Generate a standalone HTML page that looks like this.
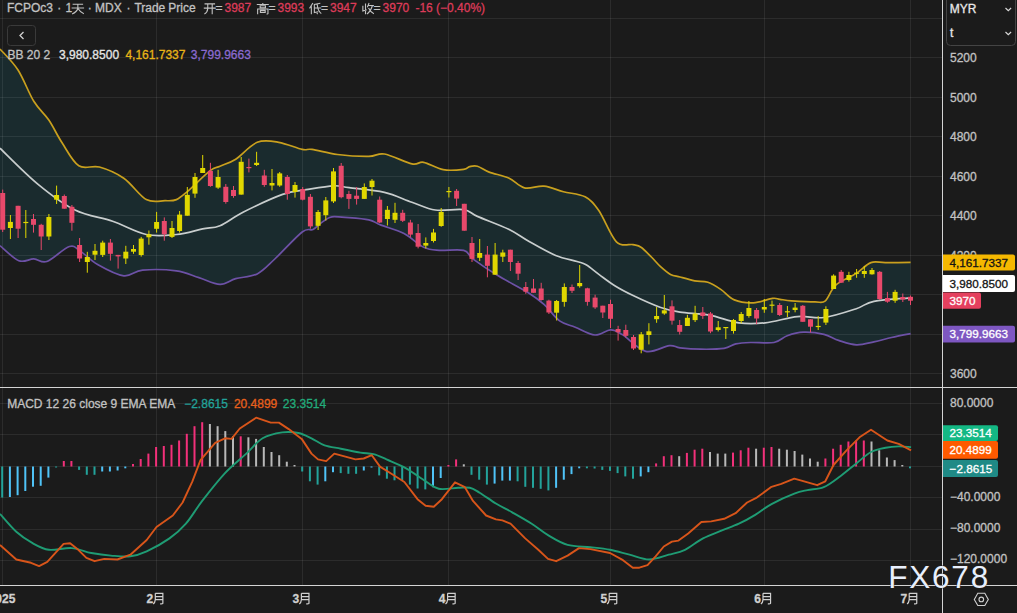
<!DOCTYPE html>
<html><head><meta charset="utf-8">
<style>
html,body{margin:0;padding:0;background:#1b1b1b;width:1017px;height:613px;overflow:hidden;}
svg{position:absolute;left:0;top:0;}
text{font-family:"Liberation Sans",sans-serif;}
</style></head><body>
<svg width="1017" height="613" viewBox="0 0 1017 613">
<rect width="1017" height="613" fill="#1b1b1b"/>
<path d="M0.0,49.0 C3.0,52.5 12.4,61.3 18.0,70.0 C23.6,78.7 28.7,93.0 33.8,101.3 C38.9,109.6 44.1,113.1 48.8,120.0 C53.5,126.9 56.9,134.9 61.9,142.5 C66.9,150.1 72.5,161.7 78.8,165.8 C85.0,169.9 91.9,164.9 99.4,167.0 C106.9,169.1 116.0,172.8 123.8,178.2 C131.6,183.6 139.4,195.8 146.3,199.6 C153.2,203.3 160.1,200.7 165.1,200.7 C170.1,200.7 172.7,201.2 176.4,199.6 C180.2,198.0 182.0,196.1 187.6,191.3 C193.2,186.5 204.7,174.9 210.1,170.7 C215.5,166.5 215.7,168.1 220.0,166.2 C224.3,164.3 229.5,163.2 235.7,159.2 C241.9,155.2 250.0,145.1 257.2,142.3 C264.4,139.5 271.2,141.1 278.7,142.3 C286.2,143.5 296.6,148.2 302.2,149.4 C307.8,150.6 306.1,148.6 312.0,149.4 C317.9,150.2 328.0,153.3 337.5,154.5 C347.0,155.7 361.0,156.5 368.8,156.4 C376.6,156.3 377.2,152.8 384.4,154.0 C391.6,155.2 405.4,162.5 411.9,163.9 C418.4,165.3 418.4,161.3 423.6,162.3 C428.8,163.3 436.5,168.5 443.2,169.7 C449.9,170.9 459.3,169.9 463.7,169.4 C468.1,168.9 467.3,167.1 469.6,166.6 C471.9,166.1 474.1,165.3 477.4,166.2 C480.7,167.1 484.0,170.1 489.2,172.1 C494.4,174.1 502.8,175.4 508.7,178.0 C514.6,180.6 518.5,186.4 524.4,187.8 C530.3,189.2 537.5,185.5 544.0,186.2 C550.5,186.8 556.6,189.9 563.5,191.7 C570.4,193.5 579.2,193.7 585.1,196.8 C591.0,199.9 593.6,203.0 598.8,210.5 C604.0,218.0 610.7,236.1 616.4,241.8 C622.1,247.5 628.9,243.7 633.0,244.6 C637.1,245.5 637.9,245.1 641.0,247.2 C644.1,249.3 648.2,253.8 651.4,257.0 C654.6,260.1 656.8,263.2 660.0,266.1 C663.2,269.0 667.2,272.6 670.5,274.4 C673.8,276.2 676.0,275.9 680.0,277.0 C684.0,278.1 690.1,279.9 694.7,280.8 C699.4,281.7 703.5,280.8 707.9,282.3 C712.3,283.8 716.7,286.7 721.1,289.6 C725.5,292.5 728.9,297.7 734.3,299.9 C739.7,302.1 747.0,303.1 753.4,302.8 C759.8,302.6 768.1,299.0 772.5,298.4 C776.9,297.8 776.7,298.9 779.9,299.3 C783.1,299.7 785.7,300.4 791.6,300.8 C797.5,301.2 809.5,301.9 815.1,301.9 C820.7,301.9 822.0,303.6 825.4,300.8 C828.8,298.0 830.6,289.8 835.7,285.2 C840.9,280.6 850.4,277.2 856.3,273.4 C862.2,269.6 866.0,264.4 870.9,262.6 C875.8,260.8 879.0,262.7 885.6,262.6 C892.2,262.6 906.4,262.4 910.6,262.3 L910.6,333.7 C907.4,334.3 897.6,336.1 891.5,337.5 C885.4,338.9 879.8,340.7 873.9,341.9 C868.0,343.1 862.2,345.1 856.3,344.8 C850.4,344.6 844.0,342.1 838.6,340.4 C833.2,338.6 829.8,335.7 823.9,334.3 C818.0,332.9 809.5,332.0 803.4,332.2 C797.3,332.4 792.1,334.0 787.2,335.7 C782.3,337.4 780.1,341.4 774.0,342.5 C767.9,343.6 756.9,342.3 750.5,342.5 C744.1,342.7 740.2,342.9 735.8,343.9 C731.4,344.9 730.0,347.5 724.1,348.4 C718.2,349.3 708.0,349.3 700.6,349.2 C693.2,349.1 685.2,348.4 680.0,347.8 C674.8,347.2 675.0,345.0 669.3,345.6 C663.6,346.2 653.6,353.2 645.8,351.4 C638.0,349.6 628.2,338.2 622.3,334.6 C616.4,331.0 615.1,329.8 610.5,329.9 C605.9,330.0 600.8,335.4 594.9,335.0 C589.0,334.6 581.2,329.6 575.3,327.2 C569.4,324.8 564.8,324.7 559.6,320.9 C554.4,317.1 549.2,309.1 544.0,304.4 C538.8,299.7 536.1,297.6 528.3,292.7 C520.5,287.8 506.1,280.7 497.0,275.1 C487.9,269.6 479.1,263.5 473.5,259.4 C467.9,255.3 469.4,251.9 463.7,250.4 C458.0,248.9 446.0,250.9 439.3,250.4 C432.6,249.9 429.5,250.1 423.6,247.3 C417.7,244.5 411.2,237.2 404.0,233.5 C396.8,229.8 386.4,227.2 380.5,224.9 C374.6,222.6 374.7,221.1 368.8,219.8 C362.9,218.5 351.1,217.8 345.0,217.3 C338.9,216.8 335.1,216.5 332.0,216.8 C328.9,217.2 328.0,218.3 326.1,219.4 C324.2,220.5 322.7,221.6 320.5,223.3 C318.3,225.0 316.1,228.1 313.0,229.5 C309.9,230.9 308.6,227.1 302.2,232.0 C295.8,236.9 282.3,252.0 274.8,259.0 C267.3,266.0 263.7,270.6 257.2,273.9 C250.7,277.2 241.9,276.9 235.7,278.6 C229.5,280.4 226.1,284.6 220.0,284.4 C213.9,284.2 206.2,279.9 198.9,277.6 C191.6,275.4 185.8,272.1 176.4,270.9 C167.0,269.6 151.4,269.3 142.6,270.1 C133.8,270.9 131.3,276.7 123.8,275.8 C116.3,274.9 104.8,268.6 97.6,264.5 C90.4,260.4 85.4,254.4 80.7,251.4 C76.0,248.4 75.0,244.8 69.4,246.5 C63.8,248.2 52.8,259.4 46.9,261.5 C41.0,263.6 38.5,259.0 33.8,258.9 C29.1,258.8 24.4,262.9 18.8,260.7 C13.2,258.5 3.1,248.2 0.0,245.7 Z" fill="#1a2b2e"/>
<rect x="0" y="18" width="942" height="1" fill="#ffffff" fill-opacity="0.08"/>
<rect x="0" y="57" width="942" height="1" fill="#ffffff" fill-opacity="0.08"/>
<rect x="0" y="97" width="942" height="1" fill="#ffffff" fill-opacity="0.08"/>
<rect x="0" y="136" width="942" height="1" fill="#ffffff" fill-opacity="0.08"/>
<rect x="0" y="176" width="942" height="1" fill="#ffffff" fill-opacity="0.08"/>
<rect x="0" y="215" width="942" height="1" fill="#ffffff" fill-opacity="0.08"/>
<rect x="0" y="255" width="942" height="1" fill="#ffffff" fill-opacity="0.08"/>
<rect x="0" y="294" width="942" height="1" fill="#ffffff" fill-opacity="0.08"/>
<rect x="0" y="334" width="942" height="1" fill="#ffffff" fill-opacity="0.08"/>
<rect x="0" y="373" width="942" height="1" fill="#ffffff" fill-opacity="0.08"/>
<rect x="0" y="403" width="942" height="1" fill="#ffffff" fill-opacity="0.08"/>
<rect x="0" y="434" width="942" height="1" fill="#ffffff" fill-opacity="0.08"/>
<rect x="0" y="466" width="942" height="1" fill="#ffffff" fill-opacity="0.08"/>
<rect x="0" y="497" width="942" height="1" fill="#ffffff" fill-opacity="0.08"/>
<rect x="0" y="529" width="942" height="1" fill="#ffffff" fill-opacity="0.08"/>
<rect x="0" y="560" width="942" height="1" fill="#ffffff" fill-opacity="0.08"/>
<rect x="2" y="0" width="1" height="585" fill="#ffffff" fill-opacity="0.08"/>
<rect x="156" y="0" width="1" height="585" fill="#ffffff" fill-opacity="0.08"/>
<rect x="302" y="0" width="1" height="585" fill="#ffffff" fill-opacity="0.08"/>
<rect x="448" y="0" width="1" height="585" fill="#ffffff" fill-opacity="0.08"/>
<rect x="610" y="0" width="1" height="585" fill="#ffffff" fill-opacity="0.08"/>
<rect x="764" y="0" width="1" height="585" fill="#ffffff" fill-opacity="0.08"/>
<rect x="910" y="0" width="1" height="585" fill="#ffffff" fill-opacity="0.08"/>
<path d="M0.0,49.0 C3.0,52.5 12.4,61.3 18.0,70.0 C23.6,78.7 28.7,93.0 33.8,101.3 C38.9,109.6 44.1,113.1 48.8,120.0 C53.5,126.9 56.9,134.9 61.9,142.5 C66.9,150.1 72.5,161.7 78.8,165.8 C85.0,169.9 91.9,164.9 99.4,167.0 C106.9,169.1 116.0,172.8 123.8,178.2 C131.6,183.6 139.4,195.8 146.3,199.6 C153.2,203.3 160.1,200.7 165.1,200.7 C170.1,200.7 172.7,201.2 176.4,199.6 C180.2,198.0 182.0,196.1 187.6,191.3 C193.2,186.5 204.7,174.9 210.1,170.7 C215.5,166.5 215.7,168.1 220.0,166.2 C224.3,164.3 229.5,163.2 235.7,159.2 C241.9,155.2 250.0,145.1 257.2,142.3 C264.4,139.5 271.2,141.1 278.7,142.3 C286.2,143.5 296.6,148.2 302.2,149.4 C307.8,150.6 306.1,148.6 312.0,149.4 C317.9,150.2 328.0,153.3 337.5,154.5 C347.0,155.7 361.0,156.5 368.8,156.4 C376.6,156.3 377.2,152.8 384.4,154.0 C391.6,155.2 405.4,162.5 411.9,163.9 C418.4,165.3 418.4,161.3 423.6,162.3 C428.8,163.3 436.5,168.5 443.2,169.7 C449.9,170.9 459.3,169.9 463.7,169.4 C468.1,168.9 467.3,167.1 469.6,166.6 C471.9,166.1 474.1,165.3 477.4,166.2 C480.7,167.1 484.0,170.1 489.2,172.1 C494.4,174.1 502.8,175.4 508.7,178.0 C514.6,180.6 518.5,186.4 524.4,187.8 C530.3,189.2 537.5,185.5 544.0,186.2 C550.5,186.8 556.6,189.9 563.5,191.7 C570.4,193.5 579.2,193.7 585.1,196.8 C591.0,199.9 593.6,203.0 598.8,210.5 C604.0,218.0 610.7,236.1 616.4,241.8 C622.1,247.5 628.9,243.7 633.0,244.6 C637.1,245.5 637.9,245.1 641.0,247.2 C644.1,249.3 648.2,253.8 651.4,257.0 C654.6,260.1 656.8,263.2 660.0,266.1 C663.2,269.0 667.2,272.6 670.5,274.4 C673.8,276.2 676.0,275.9 680.0,277.0 C684.0,278.1 690.1,279.9 694.7,280.8 C699.4,281.7 703.5,280.8 707.9,282.3 C712.3,283.8 716.7,286.7 721.1,289.6 C725.5,292.5 728.9,297.7 734.3,299.9 C739.7,302.1 747.0,303.1 753.4,302.8 C759.8,302.6 768.1,299.0 772.5,298.4 C776.9,297.8 776.7,298.9 779.9,299.3 C783.1,299.7 785.7,300.4 791.6,300.8 C797.5,301.2 809.5,301.9 815.1,301.9 C820.7,301.9 822.0,303.6 825.4,300.8 C828.8,298.0 830.6,289.8 835.7,285.2 C840.9,280.6 850.4,277.2 856.3,273.4 C862.2,269.6 866.0,264.4 870.9,262.6 C875.8,260.8 879.0,262.7 885.6,262.6 C892.2,262.6 906.4,262.4 910.6,262.3" fill="none" stroke="#c9a01e" stroke-width="1.7" stroke-linejoin="round"/>
<path d="M0.0,245.7 C3.1,248.2 13.2,258.5 18.8,260.7 C24.4,262.9 29.1,258.8 33.8,258.9 C38.5,259.0 41.0,263.6 46.9,261.5 C52.8,259.4 63.8,248.2 69.4,246.5 C75.0,244.8 76.0,248.4 80.7,251.4 C85.4,254.4 90.4,260.4 97.6,264.5 C104.8,268.6 116.3,274.9 123.8,275.8 C131.3,276.7 133.8,270.9 142.6,270.1 C151.4,269.3 167.0,269.6 176.4,270.9 C185.8,272.1 191.6,275.4 198.9,277.6 C206.2,279.9 213.9,284.2 220.0,284.4 C226.1,284.6 229.5,280.4 235.7,278.6 C241.9,276.9 250.7,277.2 257.2,273.9 C263.7,270.6 267.3,266.0 274.8,259.0 C282.3,252.0 295.8,236.9 302.2,232.0 C308.6,227.1 309.9,230.9 313.0,229.5 C316.1,228.1 318.3,225.0 320.5,223.3 C322.7,221.6 324.2,220.5 326.1,219.4 C328.0,218.3 328.9,217.2 332.0,216.8 C335.1,216.5 338.9,216.8 345.0,217.3 C351.1,217.8 362.9,218.5 368.8,219.8 C374.7,221.1 374.6,222.6 380.5,224.9 C386.4,227.2 396.8,229.8 404.0,233.5 C411.2,237.2 417.7,244.5 423.6,247.3 C429.5,250.1 432.6,249.9 439.3,250.4 C446.0,250.9 458.0,248.9 463.7,250.4 C469.4,251.9 467.9,255.3 473.5,259.4 C479.1,263.5 487.9,269.6 497.0,275.1 C506.1,280.7 520.5,287.8 528.3,292.7 C536.1,297.6 538.8,299.7 544.0,304.4 C549.2,309.1 554.4,317.1 559.6,320.9 C564.8,324.7 569.4,324.8 575.3,327.2 C581.2,329.6 589.0,334.6 594.9,335.0 C600.8,335.4 605.9,330.0 610.5,329.9 C615.1,329.8 616.4,331.0 622.3,334.6 C628.2,338.2 638.0,349.6 645.8,351.4 C653.6,353.2 663.6,346.2 669.3,345.6 C675.0,345.0 674.8,347.2 680.0,347.8 C685.2,348.4 693.2,349.1 700.6,349.2 C708.0,349.3 718.2,349.3 724.1,348.4 C730.0,347.5 731.4,344.9 735.8,343.9 C740.2,342.9 744.1,342.7 750.5,342.5 C756.9,342.3 767.9,343.6 774.0,342.5 C780.1,341.4 782.3,337.4 787.2,335.7 C792.1,334.0 797.3,332.4 803.4,332.2 C809.5,332.0 818.0,332.9 823.9,334.3 C829.8,335.7 833.2,338.6 838.6,340.4 C844.0,342.1 850.4,344.6 856.3,344.8 C862.2,345.1 868.0,343.1 873.9,341.9 C879.8,340.7 885.4,338.9 891.5,337.5 C897.6,336.1 907.4,334.3 910.6,333.7" fill="none" stroke="#6d51a6" stroke-width="1.7" stroke-linejoin="round"/>
<path d="M0.0,148.2 C6.2,154.1 25.0,173.5 37.5,183.8 C50.0,194.1 62.5,203.8 75.0,210.0 C87.5,216.2 100.7,217.2 112.6,221.3 C124.5,225.4 135.7,232.3 146.3,234.5 C156.9,236.7 167.0,235.4 176.4,234.5 C185.8,233.6 195.3,230.4 202.6,228.9 C209.9,227.4 213.2,228.5 220.0,225.7 C226.8,222.9 233.1,217.2 243.5,212.0 C253.9,206.8 272.2,198.1 282.6,194.4 C293.0,190.7 297.6,191.1 306.1,189.7 C314.6,188.3 326.3,186.1 333.5,185.8 C340.7,185.5 340.7,186.6 349.2,187.7 C357.7,188.8 373.9,190.0 384.4,192.4 C394.8,194.8 403.4,199.3 411.9,202.2 C420.4,205.1 426.7,208.8 435.3,210.0 C443.9,211.2 456.7,208.6 463.7,209.7 C470.7,210.8 469.9,213.1 477.4,216.4 C484.9,219.7 500.2,225.2 508.7,229.3 C517.2,233.4 520.5,236.6 528.3,241.0 C536.1,245.4 547.6,252.1 555.7,255.5 C563.8,258.9 571.9,259.9 577.0,261.5 C582.1,263.1 582.4,262.6 586.1,264.8 C589.8,267.0 594.4,271.1 599.2,274.6 C604.0,278.1 609.1,282.2 614.8,285.7 C620.4,289.2 625.6,291.9 633.1,295.5 C640.6,299.1 652.2,304.4 660.0,307.2 C667.8,310.0 671.8,310.9 680.0,312.2 C688.2,313.5 699.6,313.4 709.4,315.2 C719.2,317.0 729.5,321.5 738.8,322.8 C748.1,324.1 755.4,323.8 765.2,322.8 C775.0,321.8 787.7,317.5 797.5,316.6 C807.3,315.7 814.1,318.8 823.9,317.5 C833.7,316.2 848.0,311.4 856.3,308.7 C864.6,306.0 864.8,303.1 873.9,301.3 C883.0,299.5 904.5,298.4 910.6,297.8" fill="none" stroke="#c8cdcd" stroke-width="1.7" stroke-linejoin="round"/>
<rect x="2.2" y="189.6" width="1" height="42.4" fill="#e8496b"/>
<rect x="0.2" y="193.0" width="5" height="36.7" fill="#e8496b"/>
<rect x="9.9" y="215.0" width="1" height="24.0" fill="#e0d700"/>
<rect x="7.9" y="221.9" width="5" height="6.1" fill="#e0d700"/>
<rect x="17.6" y="205.8" width="1" height="32.2" fill="#e8496b"/>
<rect x="15.6" y="205.8" width="5" height="22.9" fill="#e8496b"/>
<rect x="25.3" y="210.0" width="1" height="28.0" fill="#e0d700"/>
<rect x="23.3" y="221.9" width="5" height="1.2" fill="#e0d700"/>
<rect x="33.0" y="214.0" width="1" height="18.6" fill="#e8496b"/>
<rect x="31.0" y="219.0" width="5" height="5.8" fill="#e8496b"/>
<rect x="40.7" y="223.8" width="1" height="26.2" fill="#e8496b"/>
<rect x="38.7" y="224.8" width="5" height="11.7" fill="#e8496b"/>
<rect x="48.4" y="214.0" width="1" height="26.0" fill="#e0d700"/>
<rect x="46.4" y="217.0" width="5" height="19.5" fill="#e0d700"/>
<rect x="56.1" y="185.6" width="1" height="18.4" fill="#e0d700"/>
<rect x="54.1" y="195.0" width="5" height="4.7" fill="#e0d700"/>
<rect x="63.8" y="194.5" width="1" height="14.2" fill="#e8496b"/>
<rect x="61.8" y="196.0" width="5" height="12.7" fill="#e8496b"/>
<rect x="71.4" y="205.0" width="1" height="25.7" fill="#e8496b"/>
<rect x="69.4" y="206.8" width="5" height="16.0" fill="#e8496b"/>
<rect x="79.1" y="238.0" width="1" height="24.0" fill="#e8496b"/>
<rect x="77.1" y="245.0" width="5" height="13.5" fill="#e8496b"/>
<rect x="86.8" y="251.8" width="1" height="20.9" fill="#e0d700"/>
<rect x="84.8" y="257.0" width="5" height="5.0" fill="#e0d700"/>
<rect x="94.5" y="244.0" width="1" height="16.0" fill="#e0d700"/>
<rect x="92.5" y="250.8" width="5" height="3.9" fill="#e0d700"/>
<rect x="102.2" y="240.7" width="1" height="16.3" fill="#e0d700"/>
<rect x="100.2" y="242.6" width="5" height="12.3" fill="#e0d700"/>
<rect x="109.9" y="239.0" width="1" height="21.6" fill="#e8496b"/>
<rect x="107.9" y="242.6" width="5" height="11.2" fill="#e8496b"/>
<rect x="117.6" y="254.9" width="1" height="13.7" fill="#e8496b"/>
<rect x="115.6" y="254.9" width="5" height="1.5" fill="#e8496b"/>
<rect x="125.3" y="245.8" width="1" height="18.2" fill="#e0d700"/>
<rect x="123.3" y="251.7" width="5" height="6.8" fill="#e0d700"/>
<rect x="133.0" y="245.0" width="1" height="8.8" fill="#e0d700"/>
<rect x="131.0" y="249.0" width="5" height="2.7" fill="#e0d700"/>
<rect x="140.7" y="236.9" width="1" height="19.7" fill="#e0d700"/>
<rect x="138.7" y="238.6" width="5" height="16.4" fill="#e0d700"/>
<rect x="148.4" y="230.5" width="1" height="14.2" fill="#e0d700"/>
<rect x="146.4" y="234.3" width="5" height="3.0" fill="#e0d700"/>
<rect x="156.1" y="211.9" width="1" height="20.7" fill="#e0d700"/>
<rect x="154.1" y="222.0" width="5" height="6.8" fill="#e0d700"/>
<rect x="163.8" y="217.4" width="1" height="23.3" fill="#e8496b"/>
<rect x="161.8" y="221.0" width="5" height="13.3" fill="#e8496b"/>
<rect x="171.5" y="221.0" width="1" height="17.0" fill="#e0d700"/>
<rect x="169.5" y="228.0" width="5" height="8.9" fill="#e0d700"/>
<rect x="179.1" y="211.0" width="1" height="21.6" fill="#e0d700"/>
<rect x="177.1" y="214.6" width="5" height="16.4" fill="#e0d700"/>
<rect x="186.8" y="187.0" width="1" height="28.7" fill="#e0d700"/>
<rect x="184.8" y="194.9" width="5" height="20.8" fill="#e0d700"/>
<rect x="194.5" y="173.0" width="1" height="24.8" fill="#e0d700"/>
<rect x="192.5" y="177.0" width="5" height="16.6" fill="#e0d700"/>
<rect x="202.2" y="155.0" width="1" height="18.0" fill="#e0d700"/>
<rect x="200.2" y="168.0" width="5" height="5.0" fill="#e0d700"/>
<rect x="209.9" y="162.8" width="1" height="24.0" fill="#e8496b"/>
<rect x="207.9" y="170.9" width="5" height="15.1" fill="#e8496b"/>
<rect x="217.6" y="169.8" width="1" height="19.1" fill="#e0d700"/>
<rect x="215.6" y="177.0" width="5" height="10.6" fill="#e0d700"/>
<rect x="225.3" y="184.0" width="1" height="19.7" fill="#e8496b"/>
<rect x="223.3" y="186.8" width="5" height="15.2" fill="#e8496b"/>
<rect x="233.0" y="186.0" width="1" height="11.8" fill="#e8496b"/>
<rect x="231.0" y="190.0" width="5" height="6.0" fill="#e8496b"/>
<rect x="240.7" y="157.0" width="1" height="37.6" fill="#e0d700"/>
<rect x="238.7" y="161.8" width="5" height="32.8" fill="#e0d700"/>
<rect x="248.4" y="158.6" width="1" height="13.8" fill="#e8496b"/>
<rect x="246.4" y="167.0" width="5" height="1.2" fill="#e8496b"/>
<rect x="256.1" y="151.8" width="1" height="14.2" fill="#e0d700"/>
<rect x="254.1" y="162.8" width="5" height="2.2" fill="#e0d700"/>
<rect x="263.8" y="169.8" width="1" height="17.0" fill="#e8496b"/>
<rect x="261.8" y="175.5" width="5" height="9.5" fill="#e8496b"/>
<rect x="271.5" y="169.0" width="1" height="21.4" fill="#e0d700"/>
<rect x="269.5" y="183.0" width="5" height="2.5" fill="#e0d700"/>
<rect x="279.2" y="172.0" width="1" height="14.8" fill="#e0d700"/>
<rect x="277.2" y="173.4" width="5" height="12.1" fill="#e0d700"/>
<rect x="286.8" y="175.0" width="1" height="24.7" fill="#e8496b"/>
<rect x="284.8" y="177.0" width="5" height="17.0" fill="#e8496b"/>
<rect x="294.5" y="182.0" width="1" height="15.6" fill="#e0d700"/>
<rect x="292.5" y="185.0" width="5" height="7.0" fill="#e0d700"/>
<rect x="302.2" y="187.0" width="1" height="13.4" fill="#e8496b"/>
<rect x="300.2" y="189.0" width="5" height="10.7" fill="#e8496b"/>
<rect x="309.9" y="194.0" width="1" height="34.6" fill="#e8496b"/>
<rect x="307.9" y="196.8" width="5" height="29.6" fill="#e8496b"/>
<rect x="317.6" y="210.0" width="1" height="20.0" fill="#e0d700"/>
<rect x="315.6" y="212.0" width="5" height="13.8" fill="#e0d700"/>
<rect x="325.3" y="197.0" width="1" height="23.5" fill="#e0d700"/>
<rect x="323.3" y="200.4" width="5" height="14.8" fill="#e0d700"/>
<rect x="333.0" y="168.0" width="1" height="35.0" fill="#e0d700"/>
<rect x="331.0" y="171.4" width="5" height="30.0" fill="#e0d700"/>
<rect x="340.7" y="163.0" width="1" height="35.3" fill="#e8496b"/>
<rect x="338.7" y="165.8" width="5" height="31.4" fill="#e8496b"/>
<rect x="348.4" y="190.8" width="1" height="18.1" fill="#e8496b"/>
<rect x="346.4" y="194.0" width="5" height="4.9" fill="#e8496b"/>
<rect x="356.1" y="187.0" width="1" height="17.6" fill="#e8496b"/>
<rect x="354.1" y="195.7" width="5" height="3.2" fill="#e8496b"/>
<rect x="363.8" y="183.4" width="1" height="15.5" fill="#e0d700"/>
<rect x="361.8" y="187.0" width="5" height="11.9" fill="#e0d700"/>
<rect x="371.5" y="179.0" width="1" height="16.5" fill="#e0d700"/>
<rect x="369.5" y="180.7" width="5" height="6.3" fill="#e0d700"/>
<rect x="379.2" y="196.5" width="1" height="26.5" fill="#e8496b"/>
<rect x="377.2" y="199.7" width="5" height="22.8" fill="#e8496b"/>
<rect x="386.9" y="206.0" width="1" height="19.5" fill="#e0d700"/>
<rect x="384.9" y="209.8" width="5" height="9.2" fill="#e0d700"/>
<rect x="394.5" y="202.8" width="1" height="20.2" fill="#e0d700"/>
<rect x="392.5" y="212.8" width="5" height="7.0" fill="#e0d700"/>
<rect x="402.2" y="209.8" width="1" height="12.2" fill="#e8496b"/>
<rect x="400.2" y="212.8" width="5" height="8.0" fill="#e8496b"/>
<rect x="409.9" y="219.8" width="1" height="17.6" fill="#e8496b"/>
<rect x="407.9" y="222.5" width="5" height="12.1" fill="#e8496b"/>
<rect x="417.6" y="224.0" width="1" height="24.4" fill="#e8496b"/>
<rect x="415.6" y="233.0" width="5" height="13.7" fill="#e8496b"/>
<rect x="425.3" y="237.4" width="1" height="11.0" fill="#e0d700"/>
<rect x="423.3" y="243.0" width="5" height="2.6" fill="#e0d700"/>
<rect x="433.0" y="228.9" width="1" height="13.6" fill="#e0d700"/>
<rect x="431.0" y="232.5" width="5" height="8.5" fill="#e0d700"/>
<rect x="440.7" y="208.0" width="1" height="18.8" fill="#e0d700"/>
<rect x="438.7" y="212.0" width="5" height="14.0" fill="#e0d700"/>
<rect x="448.4" y="187.0" width="1" height="10.5" fill="#e0d700"/>
<rect x="446.4" y="191.0" width="5" height="1.2" fill="#e0d700"/>
<rect x="456.1" y="189.0" width="1" height="17.0" fill="#e8496b"/>
<rect x="454.1" y="190.8" width="5" height="7.8" fill="#e8496b"/>
<rect x="463.8" y="203.8" width="1" height="26.9" fill="#e8496b"/>
<rect x="461.8" y="203.8" width="5" height="26.9" fill="#e8496b"/>
<rect x="471.5" y="237.0" width="1" height="25.0" fill="#e8496b"/>
<rect x="469.5" y="243.0" width="5" height="15.9" fill="#e8496b"/>
<rect x="479.2" y="239.0" width="1" height="22.0" fill="#e0d700"/>
<rect x="477.2" y="253.0" width="5" height="4.8" fill="#e0d700"/>
<rect x="486.9" y="246.0" width="1" height="31.3" fill="#e8496b"/>
<rect x="484.9" y="254.6" width="5" height="11.2" fill="#e8496b"/>
<rect x="494.6" y="243.0" width="1" height="31.7" fill="#e0d700"/>
<rect x="492.6" y="254.6" width="5" height="20.1" fill="#e0d700"/>
<rect x="502.3" y="249.7" width="1" height="12.3" fill="#e0d700"/>
<rect x="500.3" y="252.5" width="5" height="4.2" fill="#e0d700"/>
<rect x="509.9" y="249.7" width="1" height="21.3" fill="#e8496b"/>
<rect x="507.9" y="249.7" width="5" height="12.3" fill="#e8496b"/>
<rect x="517.6" y="261.0" width="1" height="19.0" fill="#e8496b"/>
<rect x="515.6" y="263.0" width="5" height="10.7" fill="#e8496b"/>
<rect x="525.3" y="282.0" width="1" height="11.8" fill="#e8496b"/>
<rect x="523.3" y="287.0" width="5" height="4.7" fill="#e8496b"/>
<rect x="533.0" y="279.0" width="1" height="13.8" fill="#e8496b"/>
<rect x="531.0" y="288.5" width="5" height="4.3" fill="#e8496b"/>
<rect x="540.7" y="282.8" width="1" height="17.8" fill="#e8496b"/>
<rect x="538.7" y="288.5" width="5" height="11.5" fill="#e8496b"/>
<rect x="548.4" y="299.7" width="1" height="14.3" fill="#e8496b"/>
<rect x="546.4" y="300.6" width="5" height="11.9" fill="#e8496b"/>
<rect x="556.1" y="300.0" width="1" height="20.5" fill="#e0d700"/>
<rect x="554.1" y="301.0" width="5" height="11.7" fill="#e0d700"/>
<rect x="563.8" y="283.4" width="1" height="23.3" fill="#e0d700"/>
<rect x="561.8" y="287.0" width="5" height="14.9" fill="#e0d700"/>
<rect x="571.5" y="284.5" width="1" height="8.5" fill="#e8496b"/>
<rect x="569.5" y="287.0" width="5" height="3.8" fill="#e8496b"/>
<rect x="579.2" y="265.0" width="1" height="22.7" fill="#e0d700"/>
<rect x="577.2" y="283.0" width="5" height="3.2" fill="#e0d700"/>
<rect x="586.9" y="287.7" width="1" height="18.0" fill="#e8496b"/>
<rect x="584.9" y="288.3" width="5" height="13.6" fill="#e8496b"/>
<rect x="594.6" y="294.7" width="1" height="14.2" fill="#e8496b"/>
<rect x="592.6" y="297.6" width="5" height="9.8" fill="#e8496b"/>
<rect x="602.3" y="305.7" width="1" height="12.3" fill="#e8496b"/>
<rect x="600.3" y="305.7" width="5" height="6.8" fill="#e8496b"/>
<rect x="610.0" y="299.7" width="1" height="28.3" fill="#e8496b"/>
<rect x="608.0" y="304.0" width="5" height="14.8" fill="#e8496b"/>
<rect x="617.6" y="325.8" width="1" height="14.8" fill="#e8496b"/>
<rect x="615.6" y="329.0" width="5" height="3.2" fill="#e8496b"/>
<rect x="625.3" y="324.7" width="1" height="12.8" fill="#e8496b"/>
<rect x="623.3" y="330.0" width="5" height="5.8" fill="#e8496b"/>
<rect x="633.0" y="335.0" width="1" height="15.0" fill="#e8496b"/>
<rect x="631.0" y="337.0" width="5" height="11.5" fill="#e8496b"/>
<rect x="640.7" y="332.0" width="1" height="21.3" fill="#e0d700"/>
<rect x="638.7" y="334.3" width="5" height="15.4" fill="#e0d700"/>
<rect x="648.4" y="323.2" width="1" height="21.2" fill="#e0d700"/>
<rect x="646.4" y="331.3" width="5" height="3.7" fill="#e0d700"/>
<rect x="656.1" y="307.0" width="1" height="15.8" fill="#e0d700"/>
<rect x="654.1" y="316.0" width="5" height="3.2" fill="#e0d700"/>
<rect x="663.8" y="295.0" width="1" height="19.8" fill="#e0d700"/>
<rect x="661.8" y="310.3" width="5" height="3.2" fill="#e0d700"/>
<rect x="671.5" y="300.4" width="1" height="24.2" fill="#e8496b"/>
<rect x="669.5" y="306.3" width="5" height="14.4" fill="#e8496b"/>
<rect x="679.2" y="320.0" width="1" height="14.5" fill="#e8496b"/>
<rect x="677.2" y="325.0" width="5" height="6.8" fill="#e8496b"/>
<rect x="686.9" y="314.8" width="1" height="11.2" fill="#e0d700"/>
<rect x="684.9" y="317.8" width="5" height="8.2" fill="#e0d700"/>
<rect x="694.6" y="305.8" width="1" height="16.2" fill="#e0d700"/>
<rect x="692.6" y="313.5" width="5" height="6.6" fill="#e0d700"/>
<rect x="702.3" y="307.0" width="1" height="11.9" fill="#e8496b"/>
<rect x="700.3" y="312.4" width="5" height="3.6" fill="#e8496b"/>
<rect x="710.0" y="312.0" width="1" height="21.2" fill="#e8496b"/>
<rect x="708.0" y="313.5" width="5" height="18.0" fill="#e8496b"/>
<rect x="717.7" y="321.0" width="1" height="10.5" fill="#e0d700"/>
<rect x="715.7" y="327.3" width="5" height="2.7" fill="#e0d700"/>
<rect x="725.3" y="327.0" width="1" height="12.0" fill="#e0d700"/>
<rect x="723.3" y="327.0" width="5" height="1.2" fill="#e0d700"/>
<rect x="733.0" y="319.0" width="1" height="14.6" fill="#e0d700"/>
<rect x="731.0" y="320.0" width="5" height="11.0" fill="#e0d700"/>
<rect x="740.7" y="312.0" width="1" height="11.4" fill="#e0d700"/>
<rect x="738.7" y="314.0" width="5" height="7.0" fill="#e0d700"/>
<rect x="748.4" y="301.0" width="1" height="16.7" fill="#e0d700"/>
<rect x="746.4" y="308.0" width="5" height="8.0" fill="#e0d700"/>
<rect x="756.1" y="308.0" width="1" height="16.2" fill="#e8496b"/>
<rect x="754.1" y="310.0" width="5" height="8.5" fill="#e8496b"/>
<rect x="763.8" y="299.0" width="1" height="13.8" fill="#e0d700"/>
<rect x="761.8" y="307.0" width="5" height="2.5" fill="#e0d700"/>
<rect x="771.5" y="300.6" width="1" height="12.2" fill="#e0d700"/>
<rect x="769.5" y="304.6" width="5" height="1.2" fill="#e0d700"/>
<rect x="779.2" y="303.0" width="1" height="13.0" fill="#e8496b"/>
<rect x="777.2" y="305.0" width="5" height="10.0" fill="#e8496b"/>
<rect x="786.9" y="306.0" width="1" height="11.0" fill="#e0d700"/>
<rect x="784.9" y="311.2" width="5" height="1.2" fill="#e0d700"/>
<rect x="794.6" y="303.0" width="1" height="9.3" fill="#e0d700"/>
<rect x="792.6" y="307.6" width="5" height="2.4" fill="#e0d700"/>
<rect x="802.3" y="305.0" width="1" height="16.8" fill="#e8496b"/>
<rect x="800.3" y="305.8" width="5" height="16.0" fill="#e8496b"/>
<rect x="810.0" y="319.3" width="1" height="13.1" fill="#e8496b"/>
<rect x="808.0" y="319.3" width="5" height="7.4" fill="#e8496b"/>
<rect x="817.7" y="316.0" width="1" height="14.0" fill="#e0d700"/>
<rect x="815.7" y="325.9" width="5" height="1.2" fill="#e0d700"/>
<rect x="825.4" y="306.3" width="1" height="18.7" fill="#e0d700"/>
<rect x="823.4" y="309.0" width="5" height="13.6" fill="#e0d700"/>
<rect x="833.1" y="274.3" width="1" height="14.7" fill="#e0d700"/>
<rect x="831.1" y="275.6" width="5" height="13.4" fill="#e0d700"/>
<rect x="840.7" y="270.0" width="1" height="12.7" fill="#e8496b"/>
<rect x="838.7" y="271.8" width="5" height="10.9" fill="#e8496b"/>
<rect x="848.4" y="271.8" width="1" height="9.8" fill="#e0d700"/>
<rect x="846.4" y="275.0" width="5" height="5.0" fill="#e0d700"/>
<rect x="856.1" y="269.0" width="1" height="8.8" fill="#e0d700"/>
<rect x="854.1" y="272.6" width="5" height="1.2" fill="#e0d700"/>
<rect x="863.8" y="266.0" width="1" height="11.8" fill="#e0d700"/>
<rect x="861.8" y="271.0" width="5" height="3.0" fill="#e0d700"/>
<rect x="871.5" y="268.0" width="1" height="6.6" fill="#e0d700"/>
<rect x="869.5" y="270.0" width="5" height="4.3" fill="#e0d700"/>
<rect x="879.2" y="271.0" width="1" height="29.0" fill="#e8496b"/>
<rect x="877.2" y="271.8" width="5" height="27.2" fill="#e8496b"/>
<rect x="886.9" y="291.9" width="1" height="10.9" fill="#e8496b"/>
<rect x="884.9" y="298.0" width="5" height="3.7" fill="#e8496b"/>
<rect x="894.6" y="289.8" width="1" height="13.0" fill="#e0d700"/>
<rect x="892.6" y="291.9" width="5" height="8.8" fill="#e0d700"/>
<rect x="902.3" y="293.5" width="1" height="8.5" fill="#e8496b"/>
<rect x="900.3" y="297.0" width="5" height="2.5" fill="#e8496b"/>
<rect x="910.0" y="295.5" width="1" height="9.5" fill="#e8496b"/>
<rect x="908.0" y="296.8" width="5" height="3.9" fill="#e8496b"/>
<rect x="1.2" y="466.5" width="2" height="31.0" fill="#23a39b"/>
<rect x="8.9" y="466.5" width="2" height="30.5" fill="#4fc3f7"/>
<rect x="16.6" y="466.5" width="2" height="28.7" fill="#4fc3f7"/>
<rect x="24.3" y="466.5" width="2" height="24.5" fill="#4fc3f7"/>
<rect x="32.0" y="466.5" width="2" height="20.2" fill="#4fc3f7"/>
<rect x="39.7" y="466.5" width="2" height="19.3" fill="#4fc3f7"/>
<rect x="47.4" y="466.5" width="2" height="11.1" fill="#4fc3f7"/>
<rect x="55.1" y="466.5" width="2" height="1.0" fill="#23a39b"/>
<rect x="62.8" y="461.0" width="2" height="5.5" fill="#f2307a"/>
<rect x="70.4" y="461.0" width="2" height="5.5" fill="#f2307a"/>
<rect x="78.1" y="466.5" width="2" height="3.4" fill="#23a39b"/>
<rect x="85.8" y="466.5" width="2" height="8.3" fill="#23a39b"/>
<rect x="93.5" y="466.5" width="2" height="8.3" fill="#23a39b"/>
<rect x="101.2" y="466.5" width="2" height="5.0" fill="#4fc3f7"/>
<rect x="108.9" y="466.5" width="2" height="5.0" fill="#4fc3f7"/>
<rect x="116.6" y="466.5" width="2" height="4.0" fill="#4fc3f7"/>
<rect x="124.3" y="466.5" width="2" height="1.8" fill="#4fc3f7"/>
<rect x="132.0" y="464.0" width="2" height="2.5" fill="#f2307a"/>
<rect x="139.7" y="459.0" width="2" height="7.5" fill="#f2307a"/>
<rect x="147.4" y="453.6" width="2" height="12.9" fill="#f2307a"/>
<rect x="155.1" y="447.0" width="2" height="19.5" fill="#f2307a"/>
<rect x="162.8" y="446.0" width="2" height="20.5" fill="#f2307a"/>
<rect x="170.5" y="444.8" width="2" height="21.7" fill="#f2307a"/>
<rect x="178.1" y="440.5" width="2" height="26.0" fill="#f2307a"/>
<rect x="185.8" y="433.8" width="2" height="32.7" fill="#f2307a"/>
<rect x="193.5" y="426.2" width="2" height="40.3" fill="#f2307a"/>
<rect x="201.2" y="422.2" width="2" height="44.3" fill="#f2307a"/>
<rect x="208.9" y="424.0" width="2" height="42.5" fill="#b8b8b8"/>
<rect x="216.6" y="426.2" width="2" height="40.3" fill="#b8b8b8"/>
<rect x="224.3" y="431.1" width="2" height="35.4" fill="#b8b8b8"/>
<rect x="232.0" y="436.1" width="2" height="30.4" fill="#b8b8b8"/>
<rect x="239.7" y="436.3" width="2" height="30.2" fill="#f2307a"/>
<rect x="247.4" y="437.3" width="2" height="29.2" fill="#b8b8b8"/>
<rect x="255.1" y="438.9" width="2" height="27.6" fill="#b8b8b8"/>
<rect x="262.8" y="447.0" width="2" height="19.5" fill="#b8b8b8"/>
<rect x="270.5" y="452.0" width="2" height="14.5" fill="#b8b8b8"/>
<rect x="278.2" y="455.2" width="2" height="11.3" fill="#b8b8b8"/>
<rect x="285.8" y="461.7" width="2" height="4.8" fill="#b8b8b8"/>
<rect x="293.5" y="465.0" width="2" height="1.5" fill="#b8b8b8"/>
<rect x="301.2" y="466.5" width="2" height="5.0" fill="#23a39b"/>
<rect x="308.9" y="466.5" width="2" height="14.8" fill="#23a39b"/>
<rect x="316.6" y="466.5" width="2" height="18.1" fill="#23a39b"/>
<rect x="324.3" y="466.5" width="2" height="14.8" fill="#4fc3f7"/>
<rect x="332.0" y="466.5" width="2" height="5.7" fill="#4fc3f7"/>
<rect x="339.7" y="466.5" width="2" height="6.6" fill="#23a39b"/>
<rect x="347.4" y="466.5" width="2" height="7.3" fill="#23a39b"/>
<rect x="355.1" y="466.5" width="2" height="7.3" fill="#23a39b"/>
<rect x="362.8" y="466.5" width="2" height="4.0" fill="#4fc3f7"/>
<rect x="370.5" y="466.5" width="2" height="1.0" fill="#4fc3f7"/>
<rect x="378.2" y="466.5" width="2" height="8.9" fill="#23a39b"/>
<rect x="385.9" y="466.5" width="2" height="12.2" fill="#23a39b"/>
<rect x="393.5" y="466.5" width="2" height="13.8" fill="#23a39b"/>
<rect x="401.2" y="466.5" width="2" height="14.1" fill="#23a39b"/>
<rect x="408.9" y="466.5" width="2" height="18.1" fill="#23a39b"/>
<rect x="416.6" y="466.5" width="2" height="22.0" fill="#23a39b"/>
<rect x="424.3" y="466.5" width="2" height="22.9" fill="#23a39b"/>
<rect x="432.0" y="466.5" width="2" height="20.7" fill="#4fc3f7"/>
<rect x="439.7" y="466.5" width="2" height="11.5" fill="#4fc3f7"/>
<rect x="447.4" y="465.0" width="2" height="1.5" fill="#f2307a"/>
<rect x="455.1" y="459.4" width="2" height="7.1" fill="#f2307a"/>
<rect x="462.8" y="464.3" width="2" height="2.2" fill="#b8b8b8"/>
<rect x="470.5" y="466.5" width="2" height="8.3" fill="#23a39b"/>
<rect x="478.2" y="466.5" width="2" height="13.2" fill="#23a39b"/>
<rect x="485.9" y="466.5" width="2" height="18.1" fill="#23a39b"/>
<rect x="493.6" y="466.5" width="2" height="17.1" fill="#4fc3f7"/>
<rect x="501.3" y="466.5" width="2" height="14.1" fill="#4fc3f7"/>
<rect x="508.9" y="466.5" width="2" height="14.1" fill="#4fc3f7"/>
<rect x="516.6" y="466.5" width="2" height="14.8" fill="#23a39b"/>
<rect x="524.3" y="466.5" width="2" height="20.3" fill="#23a39b"/>
<rect x="532.0" y="466.5" width="2" height="21.3" fill="#23a39b"/>
<rect x="539.7" y="466.5" width="2" height="22.3" fill="#23a39b"/>
<rect x="547.4" y="466.5" width="2" height="23.9" fill="#23a39b"/>
<rect x="555.1" y="466.5" width="2" height="21.3" fill="#4fc3f7"/>
<rect x="562.8" y="466.5" width="2" height="13.2" fill="#4fc3f7"/>
<rect x="570.5" y="466.5" width="2" height="7.6" fill="#4fc3f7"/>
<rect x="578.2" y="466.5" width="2" height="1.8" fill="#4fc3f7"/>
<rect x="585.9" y="466.5" width="2" height="1.8" fill="#23a39b"/>
<rect x="593.6" y="466.5" width="2" height="2.0" fill="#23a39b"/>
<rect x="601.3" y="466.5" width="2" height="3.4" fill="#23a39b"/>
<rect x="609.0" y="466.5" width="2" height="4.4" fill="#23a39b"/>
<rect x="616.6" y="466.5" width="2" height="6.6" fill="#23a39b"/>
<rect x="624.3" y="466.5" width="2" height="9.9" fill="#23a39b"/>
<rect x="632.0" y="466.5" width="2" height="12.2" fill="#23a39b"/>
<rect x="639.7" y="466.5" width="2" height="9.9" fill="#4fc3f7"/>
<rect x="647.4" y="466.5" width="2" height="5.7" fill="#4fc3f7"/>
<rect x="655.1" y="463.4" width="2" height="3.1" fill="#f2307a"/>
<rect x="662.8" y="456.2" width="2" height="10.3" fill="#f2307a"/>
<rect x="670.5" y="455.2" width="2" height="11.3" fill="#f2307a"/>
<rect x="678.2" y="456.2" width="2" height="10.3" fill="#b8b8b8"/>
<rect x="685.9" y="452.9" width="2" height="13.6" fill="#f2307a"/>
<rect x="693.6" y="449.7" width="2" height="16.8" fill="#f2307a"/>
<rect x="701.3" y="448.7" width="2" height="17.8" fill="#f2307a"/>
<rect x="709.0" y="452.0" width="2" height="14.5" fill="#b8b8b8"/>
<rect x="716.7" y="453.6" width="2" height="12.9" fill="#b8b8b8"/>
<rect x="724.3" y="453.6" width="2" height="12.9" fill="#b8b8b8"/>
<rect x="732.0" y="452.6" width="2" height="13.9" fill="#f2307a"/>
<rect x="739.7" y="450.3" width="2" height="16.2" fill="#f2307a"/>
<rect x="747.4" y="447.7" width="2" height="18.8" fill="#f2307a"/>
<rect x="755.1" y="448.7" width="2" height="17.8" fill="#b8b8b8"/>
<rect x="762.8" y="447.7" width="2" height="18.8" fill="#f2307a"/>
<rect x="770.5" y="447.0" width="2" height="19.5" fill="#f2307a"/>
<rect x="778.2" y="448.7" width="2" height="17.8" fill="#b8b8b8"/>
<rect x="785.9" y="449.7" width="2" height="16.8" fill="#b8b8b8"/>
<rect x="793.6" y="451.0" width="2" height="15.5" fill="#b8b8b8"/>
<rect x="801.3" y="454.6" width="2" height="11.9" fill="#b8b8b8"/>
<rect x="809.0" y="458.5" width="2" height="8.0" fill="#b8b8b8"/>
<rect x="816.7" y="461.7" width="2" height="4.8" fill="#b8b8b8"/>
<rect x="824.4" y="458.5" width="2" height="8.0" fill="#f2307a"/>
<rect x="832.1" y="448.7" width="2" height="17.8" fill="#f2307a"/>
<rect x="839.7" y="444.8" width="2" height="21.7" fill="#f2307a"/>
<rect x="847.4" y="441.5" width="2" height="25.0" fill="#f2307a"/>
<rect x="855.1" y="440.5" width="2" height="26.0" fill="#f2307a"/>
<rect x="862.8" y="440.5" width="2" height="26.0" fill="#f2307a"/>
<rect x="870.5" y="441.5" width="2" height="25.0" fill="#b8b8b8"/>
<rect x="878.2" y="450.3" width="2" height="16.2" fill="#b8b8b8"/>
<rect x="885.9" y="457.5" width="2" height="9.0" fill="#b8b8b8"/>
<rect x="893.6" y="460.1" width="2" height="6.4" fill="#b8b8b8"/>
<rect x="901.3" y="465.0" width="2" height="1.5" fill="#b8b8b8"/>
<rect x="909.0" y="466.5" width="2" height="1.8" fill="#23a39b"/>
<path d="M0.0,513.9 C2.7,516.9 10.9,526.9 16.3,531.8 C21.7,536.7 27.2,540.2 32.6,543.2 C38.0,546.2 42.4,549.0 48.9,549.8 C55.4,550.6 64.6,547.6 71.7,548.1 C78.8,548.6 84.8,551.8 91.3,553.0 C97.8,554.2 104.4,555.1 110.9,555.6 C117.4,556.1 124.4,557.0 130.4,556.3 C136.4,555.6 140.2,554.4 146.7,551.4 C153.2,548.4 163.0,543.0 169.5,538.4 C176.0,533.8 180.5,530.0 185.9,523.7 C191.3,517.5 195.7,509.3 202.2,500.9 C208.7,492.5 217.7,481.0 225.0,473.1 C232.3,465.2 240.0,459.4 246.3,453.6 C252.6,447.8 256.6,441.8 262.6,438.3 C268.6,434.8 276.2,433.3 282.2,432.4 C288.2,431.5 293.6,432.0 298.5,433.0 C303.4,434.0 307.1,436.2 311.5,438.3 C315.9,440.4 319.7,443.7 324.6,445.4 C329.5,447.1 334.9,447.5 340.9,448.7 C346.9,449.9 355.0,451.7 360.4,452.6 C365.8,453.5 369.1,453.1 373.5,454.2 C377.9,455.3 381.1,457.0 386.5,459.4 C391.9,461.8 399.6,464.6 406.1,468.3 C412.6,472.0 420.2,477.9 425.6,481.3 C431.0,484.7 433.3,487.7 438.7,488.8 C444.1,489.9 453.0,488.0 458.2,487.8 C463.4,487.6 466.2,487.0 469.8,487.8 C473.4,488.6 475.2,490.1 479.6,492.7 C484.0,495.3 490.5,500.2 495.9,503.5 C501.3,506.8 506.2,508.9 512.2,512.3 C518.2,515.7 525.7,519.9 531.7,523.7 C537.7,527.5 542.0,531.6 548.0,535.1 C554.0,538.6 560.5,542.9 567.6,544.9 C574.7,546.9 583.3,546.4 590.4,547.2 C597.5,548.0 603.5,548.5 610.0,549.8 C616.5,551.0 623.0,553.1 629.5,554.7 C636.0,556.3 642.6,559.5 649.1,559.5 C655.6,559.5 662.7,556.3 668.7,554.7 C674.7,553.1 679.3,552.5 685.0,549.8 C690.7,547.1 696.7,541.7 703.0,538.4 C709.3,535.1 716.6,532.7 722.6,530.2 C728.6,527.8 733.5,526.2 738.9,523.7 C744.3,521.2 749.8,518.2 755.2,514.9 C760.6,511.6 765.0,507.6 771.5,504.1 C778.0,500.6 788.3,496.0 794.3,493.7 C800.3,491.4 802.5,491.2 807.4,490.1 C812.3,489.0 818.3,489.5 823.7,487.2 C829.1,484.9 834.6,480.4 840.0,476.4 C845.4,472.4 851.1,467.5 856.3,463.4 C861.5,459.3 866.1,454.6 871.0,452.0 C875.9,449.4 881.0,448.6 885.6,447.7 C890.2,446.8 894.5,446.5 898.7,446.4 C903.0,446.3 909.0,447.0 911.1,447.1" fill="none" stroke="#1f9c74" stroke-width="1.9" stroke-linejoin="round"/>
<path d="M0.0,544.9 L16.3,559.5 L31.0,562.8 L39.1,566.1 L47.3,561.8 L63.6,543.9 L70.1,543.2 L78.3,549.8 L86.4,557.9 L94.6,561.2 L104.3,558.9 L117.4,559.5 L130.4,554.7 L146.7,540.0 L156.5,527.0 L172.8,515.5 L182.6,502.5 L192.4,481.3 L200.5,460.1 L215.2,442.8 L225.0,438.3 L231.5,438.9 L239.8,428.5 L256.1,417.7 L270.8,422.6 L278.9,422.6 L288.7,429.1 L301.7,438.9 L311.5,453.6 L318.0,459.4 L326.2,461.1 L334.3,453.6 L355.5,459.4 L363.7,458.5 L371.8,455.2 L380.0,466.6 L393.0,474.8 L404.4,482.0 L417.5,499.2 L425.6,505.7 L433.8,506.7 L441.9,499.2 L455.0,482.3 L464.9,487.2 L473.0,500.9 L486.1,515.5 L495.9,519.4 L502.4,520.4 L510.5,523.7 L525.2,538.4 L538.3,549.8 L548.0,558.9 L556.2,561.2 L567.6,555.6 L579.0,548.1 L590.4,549.1 L610.0,553.0 L623.0,560.2 L632.8,567.7 L639.3,567.7 L647.5,565.1 L655.6,556.3 L663.8,546.5 L671.9,541.6 L678.5,540.6 L688.2,533.5 L701.4,522.0 L711.2,521.4 L724.2,518.8 L735.6,513.2 L747.1,502.5 L756.8,497.6 L771.5,486.8 L781.3,483.9 L794.3,478.7 L804.1,481.3 L817.2,485.2 L825.3,481.3 L833.5,465.0 L846.5,450.3 L859.5,437.3 L871.0,429.8 L887.3,440.5 L898.7,443.8 L911.1,450.3" fill="none" stroke="#d8551a" stroke-width="1.9" stroke-linejoin="round"/>
<rect x="0" y="387" width="1017" height="1" fill="#d4d4d4"/>
<rect x="0" y="585" width="1017" height="1" fill="#d4d4d4"/>
<rect x="942" y="0" width="1" height="613" fill="#d4d4d4"/>
<text x="7" y="12" fill="#c2c2c2" stroke="#c2c2c2" stroke-width="0.3" font-size="12" text-anchor="start" font-weight="normal" >FCPOc3</text>
<text x="57.3" y="12" fill="#c2c2c2" stroke="#c2c2c2" stroke-width="0.3" font-size="12" text-anchor="start" font-weight="normal" >·</text>
<text x="65.6" y="12" fill="#c2c2c2" stroke="#c2c2c2" stroke-width="0.3" font-size="12" text-anchor="start" font-weight="normal" >1</text>
<path d="M72.60,4.26 L83.10,4.26 M71.60,7.94 L84.10,7.94 M77.85,4.26 L77.85,8.26 Q76.85,12.04 72.10,13.98 M78.22,8.80 Q80.35,12.47 83.85,13.66" fill="none" stroke="#c2c2c2" stroke-width="1.1" stroke-linecap="butt" stroke-linejoin="miter"/>
<text x="87.8" y="12" fill="#c2c2c2" stroke="#c2c2c2" stroke-width="0.3" font-size="12" text-anchor="start" font-weight="normal" >·</text>
<text x="95.1" y="12" fill="#c2c2c2" stroke="#c2c2c2" stroke-width="0.3" font-size="12" text-anchor="start" font-weight="normal" >MDX</text>
<text x="126.5" y="12" fill="#c2c2c2" stroke="#c2c2c2" stroke-width="0.3" font-size="12" text-anchor="start" font-weight="normal" >·</text>
<text x="134.4" y="12" fill="#c2c2c2" stroke="#c2c2c2" stroke-width="0.3" font-size="12" text-anchor="start" font-weight="normal" >Trade</text>
<text x="168.3" y="12" fill="#c2c2c2" stroke="#c2c2c2" stroke-width="0.3" font-size="12" text-anchor="start" font-weight="normal" >Price</text>
<path d="M204.52,3.90 L215.08,3.90 M203.80,8.15 L215.80,8.15 M207.76,3.90 L207.76,8.60 Q207.40,12.52 204.40,13.98 M212.20,3.90 L212.20,14.20" fill="none" stroke="#c2c2c2" stroke-width="1.1" stroke-linecap="butt" stroke-linejoin="miter"/>
<text x="215.4" y="12" fill="#c2c2c2" stroke="#c2c2c2" stroke-width="0.3" font-size="12" text-anchor="start" font-weight="normal" >=</text>
<text x="224.5" y="12" fill="#dd3b59" stroke="#dd3b59" stroke-width="0.3" font-size="12" text-anchor="start" font-weight="normal" >3987</text>
<path d="M262.80,3.00 L262.80,4.12 M256.80,4.46 L268.80,4.46 M260.16,5.69 L265.44,5.69 L265.44,7.70 L260.16,7.70 Z M257.64,14.20 L257.64,8.94 L267.96,8.94 L267.96,13.64 L266.64,14.20 M260.40,10.39 L265.20,10.39 L265.20,12.41 L260.40,12.41 Z" fill="none" stroke="#c2c2c2" stroke-width="1.1" stroke-linecap="butt" stroke-linejoin="miter"/>
<text x="268.40000000000003" y="12" fill="#c2c2c2" stroke="#c2c2c2" stroke-width="0.3" font-size="12" text-anchor="start" font-weight="normal" >=</text>
<text x="277.5" y="12" fill="#dd3b59" stroke="#dd3b59" stroke-width="0.3" font-size="12" text-anchor="start" font-weight="normal" >3993</text>
<path d="M312.90,3.00 L309.54,8.38 M311.34,6.36 L311.34,14.20 M320.34,3.22 L314.34,4.34 L314.34,12.63 L318.30,11.74 M314.34,8.04 L321.30,8.04 M317.22,4.34 Q317.70,10.84 321.30,13.64 M316.74,13.08 L317.70,13.98" fill="none" stroke="#c2c2c2" stroke-width="1.1" stroke-linecap="butt" stroke-linejoin="miter"/>
<text x="320.90000000000003" y="12" fill="#c2c2c2" stroke="#c2c2c2" stroke-width="0.3" font-size="12" text-anchor="start" font-weight="normal" >=</text>
<text x="330.0" y="12" fill="#dd3b59" stroke="#dd3b59" stroke-width="0.3" font-size="12" text-anchor="start" font-weight="normal" >3947</text>
<path d="M362.86,5.80 L362.86,11.06 L366.70,9.72 M365.50,3.45 L365.50,14.20 M369.10,3.00 L367.30,7.26 M367.90,5.46 L373.90,5.46 M372.46,5.46 Q370.54,11.40 366.94,13.98 M368.50,8.04 Q370.90,12.52 373.90,13.86" fill="none" stroke="#c2c2c2" stroke-width="1.1" stroke-linecap="butt" stroke-linejoin="miter"/>
<text x="373.5" y="12" fill="#c2c2c2" stroke="#c2c2c2" stroke-width="0.3" font-size="12" text-anchor="start" font-weight="normal" >=</text>
<text x="382.59999999999997" y="12" fill="#dd3b59" stroke="#dd3b59" stroke-width="0.3" font-size="12" text-anchor="start" font-weight="normal" >3970</text>
<text x="7.5" y="59.0" fill="#c2c2c2" stroke="#c2c2c2" stroke-width="0.3" font-size="12" text-anchor="start" font-weight="normal" >BB 20 2</text>
<text x="59" y="59.0" fill="#e6e6e6" stroke="#e6e6e6" stroke-width="0.3" font-size="12" text-anchor="start" font-weight="normal" >3,980.8500</text>
<text x="125.4" y="59.0" fill="#e8b417" stroke="#e8b417" stroke-width="0.3" font-size="12" text-anchor="start" font-weight="normal" >4,161.7337</text>
<text x="190.8" y="59.0" fill="#8a6ad0" stroke="#8a6ad0" stroke-width="0.3" font-size="12" text-anchor="start" font-weight="normal" >3,799.9663</text>
<text x="415.4" y="12" fill="#dd3b59" stroke="#dd3b59" stroke-width="0.3" font-size="12" text-anchor="start" font-weight="normal" >-16 (−0.40%)</text>
<rect x="7.5" y="25.5" width="28" height="20" rx="3" fill="none" stroke="#3a3a3a" stroke-width="1"/>
<path d="M23.5,32 L20,35.5 L23.5,39" fill="none" stroke="#d0d0d0" stroke-width="1.3"/>
<text x="7.2" y="407.8" fill="#c2c2c2" stroke="#c2c2c2" stroke-width="0.3" font-size="12" text-anchor="start" font-weight="normal" >MACD 12 26 close 9 EMA EMA</text>
<text x="184.2" y="407.8" fill="#22a39a" stroke="#22a39a" stroke-width="0.3" font-size="12" text-anchor="start" font-weight="normal" >−2.8615</text>
<text x="233.9" y="407.8" fill="#e8601c" stroke="#e8601c" stroke-width="0.3" font-size="12" text-anchor="start" font-weight="normal" >20.4899</text>
<text x="282.8" y="407.8" fill="#22ab7a" stroke="#22ab7a" stroke-width="0.3" font-size="12" text-anchor="start" font-weight="normal" >23.3514</text>
<text x="950" y="62.2" fill="#c2c2c2" stroke="#c2c2c2" stroke-width="0.3" font-size="12" text-anchor="start" font-weight="normal" >5200</text>
<text x="950" y="101.7" fill="#c2c2c2" stroke="#c2c2c2" stroke-width="0.3" font-size="12" text-anchor="start" font-weight="normal" >5000</text>
<text x="950" y="141.2" fill="#c2c2c2" stroke="#c2c2c2" stroke-width="0.3" font-size="12" text-anchor="start" font-weight="normal" >4800</text>
<text x="950" y="180.7" fill="#c2c2c2" stroke="#c2c2c2" stroke-width="0.3" font-size="12" text-anchor="start" font-weight="normal" >4600</text>
<text x="950" y="220.2" fill="#c2c2c2" stroke="#c2c2c2" stroke-width="0.3" font-size="12" text-anchor="start" font-weight="normal" >4400</text>
<text x="950" y="259.7" fill="#c2c2c2" stroke="#c2c2c2" stroke-width="0.3" font-size="12" text-anchor="start" font-weight="normal" >4200</text>
<text x="950" y="378.2" fill="#c2c2c2" stroke="#c2c2c2" stroke-width="0.3" font-size="12" text-anchor="start" font-weight="normal" >3600</text>
<text x="950" y="407.4" fill="#c2c2c2" stroke="#c2c2c2" stroke-width="0.3" font-size="12" text-anchor="start" font-weight="normal" >80.0000</text>
<text x="950" y="501.0" fill="#c2c2c2" stroke="#c2c2c2" stroke-width="0.3" font-size="12" text-anchor="start" font-weight="normal" >−40.0000</text>
<text x="950" y="532.2" fill="#c2c2c2" stroke="#c2c2c2" stroke-width="0.3" font-size="12" text-anchor="start" font-weight="normal" >−80.0000</text>
<text x="950" y="563.4000000000001" fill="#c2c2c2" stroke="#c2c2c2" stroke-width="0.3" font-size="12" text-anchor="start" font-weight="normal" >−120.0000</text>
<path d="M943,254.4 H1013 Q1015,254.4 1015,256.4 V268.5 Q1015,270.5 1013,270.5 H943 Z" fill="#f5b800"/>
<text x="949.6" y="266.65" fill="#131313" stroke="#131313" stroke-width="0.3" font-size="11.7" text-anchor="start" font-weight="normal" >4,161.7337</text>
<path d="M943,275 H1013 Q1015,275 1015,277 V290 Q1015,292 1013,292 H943 Z" fill="#ffffff"/>
<text x="949.6" y="287.7" fill="#131313" stroke="#131313" stroke-width="0.3" font-size="11.7" text-anchor="start" font-weight="normal" >3,980.8500</text>
<path d="M943,292.6 H979 Q981,292.6 981,294.6 V306.7 Q981,308.7 979,308.7 H943 Z" fill="#e5405e"/>
<text x="949.6" y="304.84999999999997" fill="#ffffff" stroke="#ffffff" stroke-width="0.3" font-size="11.7" text-anchor="start" font-weight="normal" >3970</text>
<path d="M943,325.8 H1013 Q1015,325.8 1015,327.8 V340.6 Q1015,342.6 1013,342.6 H943 Z" fill="#7e57c2"/>
<text x="949.6" y="338.40000000000003" fill="#ffffff" stroke="#ffffff" stroke-width="0.3" font-size="11.7" text-anchor="start" font-weight="normal" >3,799.9663</text>
<path d="M943,425.3 H996 Q998,425.3 998,427.3 V439.1 Q998,441.1 996,441.1 H943 Z" fill="#14b884"/>
<text x="949.6" y="437.40000000000003" fill="#ffffff" stroke="#ffffff" stroke-width="0.3" font-size="11.7" text-anchor="start" font-weight="normal" >23.3514</text>
<path d="M943,441.1 H996 Q998,441.1 998,443.1 V456.7 Q998,458.7 996,458.7 H943 Z" fill="#ff5a00"/>
<text x="949.6" y="454.09999999999997" fill="#ffffff" stroke="#ffffff" stroke-width="0.3" font-size="11.7" text-anchor="start" font-weight="normal" >20.4899</text>
<path d="M943,460 H996 Q998,460 998,462 V475 Q998,477 996,477 H943 Z" fill="#1f8a86"/>
<text x="949.6" y="472.7" fill="#ffffff" stroke="#ffffff" stroke-width="0.3" font-size="11.7" text-anchor="start" font-weight="normal" >−2.8615</text>
<rect x="946.5" y="-5" width="69" height="50.5" rx="4" fill="none" stroke="#444" stroke-width="1"/>
<text x="949.7" y="12.7" fill="#e8e8e8" stroke="#e8e8e8" stroke-width="0.3" font-size="12" text-anchor="start" font-weight="normal" >MYR</text>
<text x="950" y="36.5" fill="#e8e8e8" stroke="#e8e8e8" stroke-width="0.3" font-size="12" text-anchor="start" font-weight="normal" >t</text>
<path d="M1005.5,8 L1008.3,10.6 L1011.1,8" fill="none" stroke="#d8d8d8" stroke-width="1.2"/>
<path d="M1005.5,32 L1008.3,34.6 L1011.1,32" fill="none" stroke="#d8d8d8" stroke-width="1.2"/>
<text x="2" y="603" fill="#d0d0d0" stroke="#d0d0d0" stroke-width="0.3" font-size="12" text-anchor="middle" font-weight="bold" >2025</text>
<text x="146.5" y="603" fill="#d0d0d0" stroke="#d0d0d0" stroke-width="0.3" font-size="12" text-anchor="start" font-weight="bold" >2</text>
<path d="M155.30,593.33 L155.30,599.60 Q155.09,602.46 153.20,604.00 M155.30,593.33 L162.86,593.33 L162.86,603.34 Q162.86,604.00 160.13,603.78 M155.30,596.63 L162.86,596.63 M155.30,599.60 L162.86,599.60" fill="none" stroke="#d0d0d0" stroke-width="1.2" stroke-linecap="butt" stroke-linejoin="miter"/>
<text x="292.59999999999997" y="603" fill="#d0d0d0" stroke="#d0d0d0" stroke-width="0.3" font-size="12" text-anchor="start" font-weight="bold" >3</text>
<path d="M301.40,593.33 L301.40,599.60 Q301.19,602.46 299.30,604.00 M301.40,593.33 L308.96,593.33 L308.96,603.34 Q308.96,604.00 306.23,603.78 M301.40,596.63 L308.96,596.63 M301.40,599.60 L308.96,599.60" fill="none" stroke="#d0d0d0" stroke-width="1.2" stroke-linecap="butt" stroke-linejoin="miter"/>
<text x="438.79999999999995" y="603" fill="#d0d0d0" stroke="#d0d0d0" stroke-width="0.3" font-size="12" text-anchor="start" font-weight="bold" >4</text>
<path d="M447.60,593.33 L447.60,599.60 Q447.39,602.46 445.50,604.00 M447.60,593.33 L455.16,593.33 L455.16,603.34 Q455.16,604.00 452.43,603.78 M447.60,596.63 L455.16,596.63 M447.60,599.60 L455.16,599.60" fill="none" stroke="#d0d0d0" stroke-width="1.2" stroke-linecap="butt" stroke-linejoin="miter"/>
<text x="600.4" y="603" fill="#d0d0d0" stroke="#d0d0d0" stroke-width="0.3" font-size="12" text-anchor="start" font-weight="bold" >5</text>
<path d="M609.20,593.33 L609.20,599.60 Q608.99,602.46 607.10,604.00 M609.20,593.33 L616.76,593.33 L616.76,603.34 Q616.76,604.00 614.03,603.78 M609.20,596.63 L616.76,596.63 M609.20,599.60 L616.76,599.60" fill="none" stroke="#d0d0d0" stroke-width="1.2" stroke-linecap="butt" stroke-linejoin="miter"/>
<text x="754.1999999999999" y="603" fill="#d0d0d0" stroke="#d0d0d0" stroke-width="0.3" font-size="12" text-anchor="start" font-weight="bold" >6</text>
<path d="M763.00,593.33 L763.00,599.60 Q762.79,602.46 760.90,604.00 M763.00,593.33 L770.56,593.33 L770.56,603.34 Q770.56,604.00 767.83,603.78 M763.00,596.63 L770.56,596.63 M763.00,599.60 L770.56,599.60" fill="none" stroke="#d0d0d0" stroke-width="1.2" stroke-linecap="butt" stroke-linejoin="miter"/>
<text x="900.4" y="603" fill="#d0d0d0" stroke="#d0d0d0" stroke-width="0.3" font-size="12" text-anchor="start" font-weight="bold" >7</text>
<path d="M909.20,593.33 L909.20,599.60 Q908.99,602.46 907.10,604.00 M909.20,593.33 L916.76,593.33 L916.76,603.34 Q916.76,604.00 914.03,603.78 M909.20,596.63 L916.76,596.63 M909.20,599.60 L916.76,599.60" fill="none" stroke="#d0d0d0" stroke-width="1.2" stroke-linecap="butt" stroke-linejoin="miter"/>
<text x="888.2" y="588" fill="#e8f0fe" stroke="#2a2018" stroke-width="0.8" paint-order="stroke" font-size="31.5" letter-spacing="1.8" font-family="Liberation Sans, sans-serif">FX678</text>
<path d="M974.3,599.4 L977.8,593.3 L984.8,593.3 L988.3,599.4 L984.8,605.5 L977.8,605.5 Z" fill="none" stroke="#d0d0d0" stroke-width="1.1"/>
<circle cx="981.3" cy="599.4" r="2.3" fill="none" stroke="#d0d0d0" stroke-width="1.1"/>
</svg>
</body></html>
